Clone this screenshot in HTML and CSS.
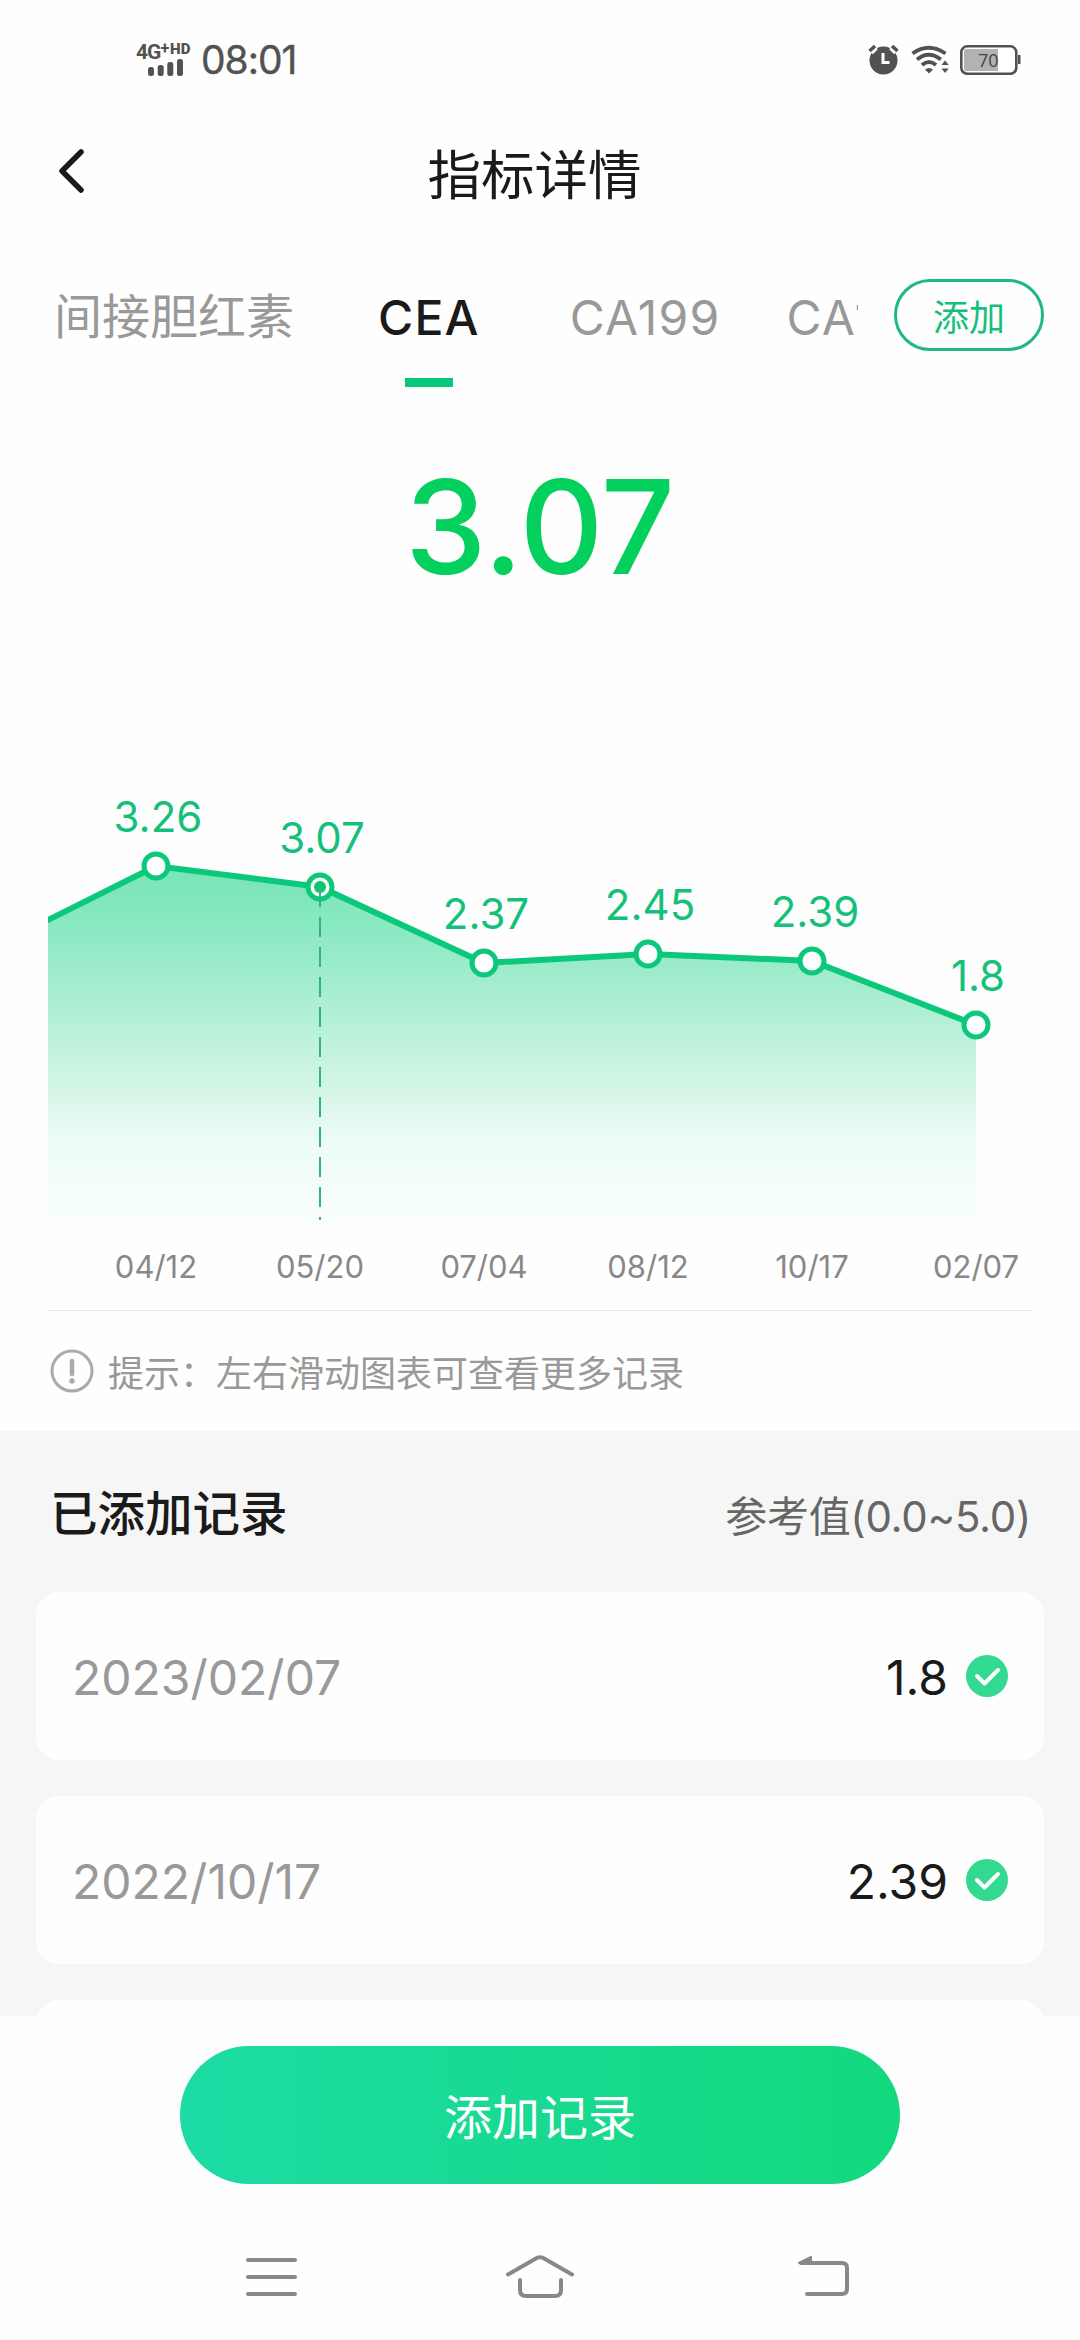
FILE: index.html
```html
<!DOCTYPE html>
<html lang="zh-CN">
<head>
  <meta charset="UTF-8" />
  <title>指标详情</title>
  <link rel="stylesheet" href="styles.css">
</head>
<body>
  <div class="phone">
    <div class="status-bar">
      <div class="network">
        <div class="network-type">4G<sup>+</sup><b>HD</b></div>
        <svg class="signal" width="36" height="17" viewBox="0 0 36 17">
          <rect x="0" y="8" width="6" height="9" rx="2.5" />
          <rect x="9.7" y="6" width="6" height="11" rx="2.5" />
          <rect x="19.3" y="3" width="6" height="14" rx="2.5" />
          <rect x="29" y="0" width="6" height="17" rx="2.5" />
        </svg>
      </div>
      <span class="clock">08:01</span>
      <div class="status-icons">
        <svg width="32" height="30" viewBox="0 0 32 30">
          <circle cx="15.5" cy="15.5" r="14" fill="#525252" />
          <path d="M2 6.5L7 1.5M24 1.5L29 6.5" stroke="#fff" stroke-width="8" />
          <path d="M1.5 6L7 1M24 1L29.5 6" stroke="#525252" stroke-width="3.5" />
          <path d="M15 8V17.5H21.5" fill="none" stroke="#fff" stroke-width="3" />
        </svg>
        <svg width="38" height="30" viewBox="0 0 38 30">
          <g fill="none" stroke="#525252" stroke-width="3.8">
            <path d="M1.5 8.5Q17.5 -3 34.5 8.5" />
            <path d="M6 14.5Q17.8 5 29.8 14.5" />
            <path d="M11 20Q18 14 25 20" />
          </g>
          <path d="M14 24.5Q18 21.5 22 24.5L18 28.5Z" fill="#525252" />
          <path d="M34 15.5L37.8 20H30.5ZM34 28L37.8 23.5H30.5Z" fill="#525252" />
        </svg>
        <svg width="62" height="30" viewBox="0 0 62 30">
          <rect x="1.3" y="1.3" width="55" height="27.5" rx="6" fill="#fff" stroke="#525252" stroke-width="2.6" />
          <path d="M6 4H38V26H6Q4 26 4 24V6Q4 4 6 4Z" fill="#b2b2b2" />
          <rect x="58" y="10" width="2.5" height="9" fill="#525252" />
          <text x="18" y="22" class="battery-text">70</text>
        </svg>
      </div>
    </div>

    <header class="nav-header">
      <svg class="back" width="30" height="48" viewBox="0 0 30 48">
        <path d="M24 5L5 24L24 43" fill="none" stroke="#1a1a1a" stroke-width="5.5" stroke-linecap="round" stroke-linejoin="round" />
      </svg>
      <h1>指标详情</h1>
    </header>

    <div class="tabs-row">
      <div class="tabs">
        <span class="tab">间接胆红素</span>
        <span class="tab latin active">CEA</span>
        <span class="tab latin">CA199</span>
        <span class="tab latin">CA125</span>
      </div>
      <button class="add-btn">添加</button>
    </div>

    <div class="current-value">3.07</div>

    <svg class="chart" width="984" height="560" viewBox="0 0 984 560">
      <defs>
        <linearGradient id="area" gradientUnits="userSpaceOnUse" x1="0" y1="116" x2="0" y2="470">
          <stop offset="0" stop-color="#77e5b5" />
          <stop offset="0.18" stop-color="#8ae9c2" />
          <stop offset="0.42" stop-color="#b2efd6" />
          <stop offset="0.7" stop-color="#dff8ed" />
          <stop offset="0.78" stop-color="#edfcf6" />
          <stop offset="1" stop-color="#f8fffd" />
        </linearGradient>
      </defs>
      <path d="M0 170L108 116L272 137L436 213L600 204L764 211L928 275V470H0Z" fill="url(#area)" />
      <polyline class="line" points="-10,175 108,116 272,137 436,213 600,204 764,211 928,275" />
      <g class="points">
        <circle cx="108" cy="116" r="12" />
        <circle cx="272" cy="137" r="12" />
        <circle cx="436" cy="213" r="12" />
        <circle cx="600" cy="204" r="12" />
        <circle cx="764" cy="211" r="12" />
        <circle cx="928" cy="275" r="12" />
      </g>
      <circle cx="272" cy="137" r="6" fill="#0bc96b" />
      <line class="marker" x1="272" y1="137" x2="272" y2="470" />
      <g class="values">
        <text x="110" y="82">3.26</text>
        <text x="274" y="103">3.07</text>
        <text x="438" y="179">2.37</text>
        <text x="602" y="170">2.45</text>
        <text x="767" y="177">2.39</text>
        <text x="930" y="241">1.8</text>
      </g>
      <g class="dates">
        <text x="108" y="528">04/12</text>
        <text x="272" y="528">05/20</text>
        <text x="436" y="528">07/04</text>
        <text x="600" y="528">08/12</text>
        <text x="764" y="528">10/17</text>
        <text x="928" y="528">02/07</text>
      </g>
    </svg>

    <div class="tip">
      <svg width="44" height="44" viewBox="0 0 44 44">
        <circle cx="22" cy="22" r="20" fill="none" stroke="#aaa" stroke-width="3" />
        <path d="M22 12V25" stroke="#aaa" stroke-width="4.5" stroke-linecap="round" />
        <circle cx="22" cy="32" r="2.7" fill="#aaa" />
      </svg>
      <span>提示：左右滑动图表可查看更多记录</span>
    </div>

    <section class="records">
      <div class="records-head">
        <h2>已添加记录</h2>
        <span class="reference">参考值(0.0~5.0)</span>
      </div>
      <div class="record">
        <span class="record-date">2023/02/07</span>
        <span class="record-value">1.8</span>
        <svg width="42" height="42" viewBox="0 0 42 42">
          <circle cx="21" cy="21" r="21" fill="#33d891" />
          <path d="M11 21L18.5 28.5L32 15" class="check" />
        </svg>
      </div>
      <div class="record">
        <span class="record-date">2022/10/17</span>
        <span class="record-value">2.39</span>
        <svg width="42" height="42" viewBox="0 0 42 42">
          <circle cx="21" cy="21" r="21" fill="#33d891" />
          <path d="M11 21L18.5 28.5L32 15" class="check" />
        </svg>
      </div>
      <div class="record"></div>
    </section>

    <footer class="bottom">
      <button class="primary-btn">添加记录</button>
    </footer>

    <nav class="system-nav">
      <svg width="72" height="48" viewBox="0 0 72 48">
        <path d="M13 7H60M13 24H60M13 41H60" />
      </svg>
      <svg width="72" height="48" viewBox="0 0 72 48">
        <path d="M4 21.5L31 6Q36 2.5 41 6L68 21.5" />
        <path d="M16 27V37Q16 43 22 43H51Q57 43 57 37V27" />
      </svg>
      <svg width="72" height="48" viewBox="0 0 72 48">
        <path d="M28 10H69Q74 10 74 15V36Q74 41 69 41H34" />
        <path d="M26 10L38 4V10Z" class="arrow" />
      </svg>
    </nav>
  </div>
</body>
</html>
```
FILE: styles.css
```css
* {
  box-sizing: border-box;
}
body {
  margin: 0;
  font-family: Inter, 'Noto Sans CJK SC', sans-serif;
  color: #1a1a1a;
  background-color: #fefefe;
}
.phone {
  width: 1080px;
  height: 2340px;
  display: flex;
  flex-direction: column;
  overflow: hidden;
}

/* status bar */
.status-bar {
  height: 120px;
  padding: 0 58px 0 136px;
  display: flex;
  align-items: center;
  color: #525252;
}
.network {
  width: 65px;
  height: 32px;
}
.network-type {
  display: flex;
  align-items: flex-start;
  height: 15px;
  font-size: 21px;
  font-family: Roboto, sans-serif;
  line-height: 16px;
  font-weight: 700;
  letter-spacing: -1px;
}
.network-type sup {
  font-size: 16px;
  line-height: 9px;
}
.network-type b {
  margin-left: 2px;
  font-size: 15px;
  line-height: 11px;
  letter-spacing: 0;
}
.signal {
  display: block;
  margin-left: 12px;
  fill: #525252;
}
.clock {
  font-size: 39px;
  font-weight: 400;
  line-height: 40px;
  letter-spacing: -1px;
  -webkit-text-stroke: 0.4px #525252;
}
.status-icons {
  margin-left: auto;
  display: flex;
  align-items: center;
  gap: 11px;
}
.battery-text {
  font-family: 'Open Sans', sans-serif;
  font-size: 18px;
  fill: #444;
}

/* header */
.nav-header {
  position: relative;
  height: 102px;
  display: flex;
  align-items: center;
  justify-content: center;
}
.back {
  position: absolute;
  left: 57px;
  top: 27px;
}
h1 {
  margin: 0;
  padding: 9px 11px 0 0;
  font-size: 53.5px;
  font-weight: 400;
  line-height: 60px;
}

/* tabs */
.tabs-row {
  height: 186px;
  padding: 0 36px 0 54px;
  display: flex;
  align-items: center;
  justify-content: space-between;
}
.tabs {
  width: 804px;
  height: 150px;
  display: flex;
  gap: 84px;
  overflow: hidden;
}
.tab {
  position: relative;
  flex: none;
  font-size: 48px;
  line-height: 154px;
  color: #999;
}
.tab.latin {
  letter-spacing: 1.2px;
  line-height: 155px;
}
.tab.active {
  margin-right: 6px;
  color: #1a1a1a;
  font-weight: 500;
}
.tab:last-child {
  margin-left: -18px;
}
.tab.active::after {
  content: '';
  position: absolute;
  left: 50%;
  bottom: 3px;
  width: 48px;
  height: 9px;
  margin-left: -24px;
  background-color: #08c979;
}
.add-btn {
  width: 150px;
  height: 72px;
  padding: 0;
  border: 3px solid #1db982;
  border-radius: 36px;
  background: none;
  color: #15c07b;
  font-family: inherit;
  font-size: 36px;
}

.current-value {
  height: 342px;
  padding-top: 44px;
  font-size: 130px;
  font-weight: 500;
  line-height: 150px;
  text-align: center;
  color: #03d05d;
}

/* chart */
.chart {
  display: block;
  flex: none;
  margin-left: 48px;
}
.line {
  fill: none;
  stroke: #0bc87a;
  stroke-width: 6;
}
.points circle {
  fill: #fff;
  stroke: #0bc87a;
  stroke-width: 5;
}
.marker {
  stroke: #2fb487;
  stroke-width: 2;
  stroke-dasharray: 20 10;
}
.values {
  font-size: 42px;
  fill: #15c07b;
  text-anchor: middle;
}
.dates {
  font-size: 31px;
  fill: #888;
  text-anchor: middle;
}
.tip {
  height: 121px;
  margin: 0 48px;
  padding-left: 2px;
  border-top: 1px solid #e6e6e6;
  display: flex;
  align-items: center;
  gap: 14px;
  font-size: 36px;
  color: #999;
}

/* records */
.records {
  height: 585px;
  padding: 0 36px;
  background-color: #f6f6f6;
  overflow: hidden;
}
.records-head {
  height: 161px;
  padding: 4px 13px 0 14px;
  display: flex;
  align-items: center;
  justify-content: space-between;
}
h2 {
  margin: 0 0 6px;
  font-size: 47.5px;
  font-weight: 500;
}
.reference {
  font-size: 42px;
  letter-spacing: -0.3px;
  color: #666;
}
.record {
  height: 168px;
  margin-bottom: 36px;
  padding: 0 36px;
  border-radius: 24px;
  background-color: #fefefe;
  display: flex;
  align-items: center;
  font-size: 48px;
}
.record-date {
  flex: 1;
  padding-top: 3px;
  color: #999;
}
.record-value {
  margin-right: 18px;
  padding-top: 3px;
}
.check {
  fill: none;
  stroke: #fff;
  stroke-width: 4;
  stroke-linecap: round;
  stroke-linejoin: round;
}

/* bottom */
.bottom {
  height: 198px;
  display: flex;
  align-items: center;
  justify-content: center;
}
.primary-btn {
  width: 720px;
  height: 138px;
  padding: 0 0 3px;
  border: none;
  border-radius: 69px;
  background: linear-gradient(90deg, #1cdba4, #13d97d);
  color: #fff;
  font-family: inherit;
  font-size: 48px;
}
.system-nav {
  height: 126px;
  padding: 0 235px;
  display: flex;
  align-items: center;
  justify-content: space-between;
}
.system-nav svg {
  overflow: visible;
}
.system-nav path {
  fill: none;
  stroke: #888;
  stroke-width: 4;
  stroke-linecap: round;
  stroke-linejoin: round;
}
.system-nav .arrow {
  fill: #888;
  stroke-width: 2;
}
```
